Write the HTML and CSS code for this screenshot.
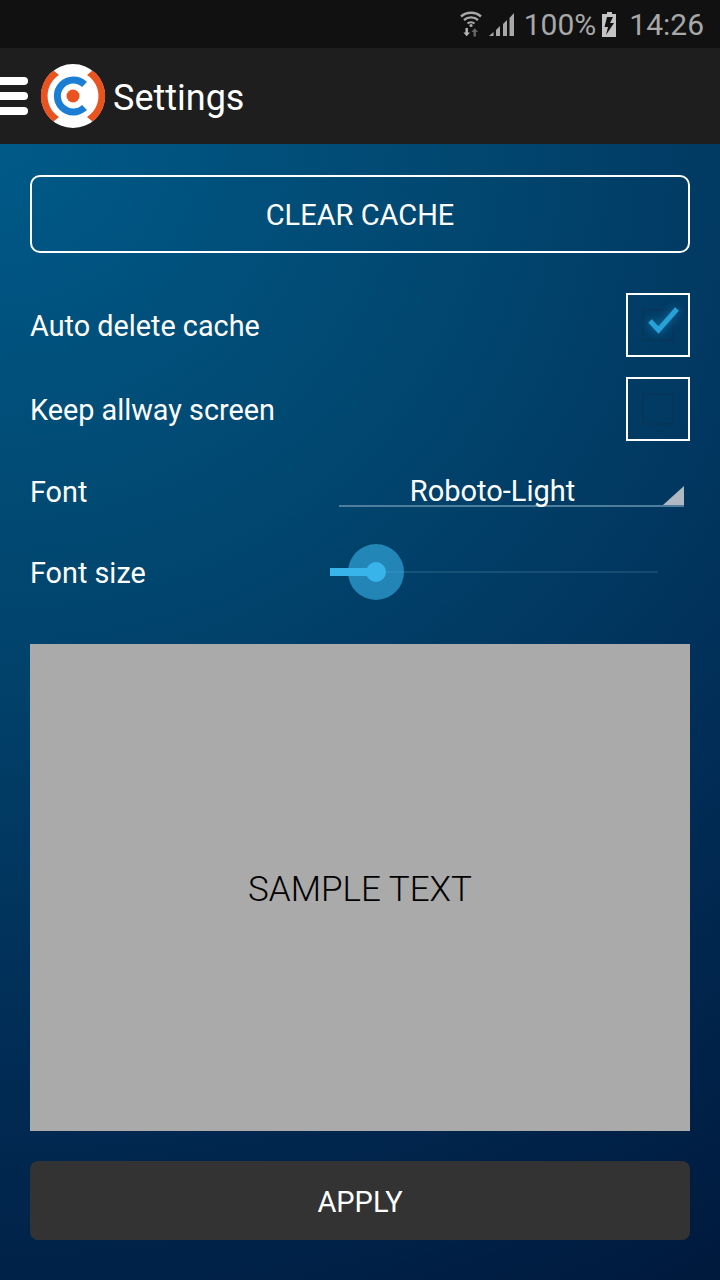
FILE: index.html
```html
<!DOCTYPE html>
<html lang="en">
<head>
    <meta charset="UTF-8">
    <meta name="viewport" content="width=device-width, initial-scale=1.0">
    <title>Settings</title>
    <link rel="stylesheet" href="styles.css">
</head>
<body>
    <div class="status-bar">
        <svg class="icon-wifi" width="22" height="26" viewBox="0 0 22 26">
            <path d="M1 5.500C6.500 .5 15.500 .5 21 5.500" fill="none" stroke="#a8a8a8" stroke-width="2.400"/>
            <path d="M4 9C8 5.500 14 5.500 18 9" fill="none" stroke="#a8a8a8" stroke-width="2.400"/>
            <path d="M7.500 12.500C9.500 10.800 12.500 10.800 14.500 12.500" fill="none" stroke="#a8a8a8" stroke-width="2.200"/>
            <circle cx="11" cy="14.500" r="1.600" fill="#a8a8a8"/>
            <path d="M5.500 17h2.400v4.500h2.100l-3.300 3.800-3.300-3.800h2.100z" fill="#b8b8b8"/>
            <path d="M13.500 25.500v-4.500h-2.100l3.300-3.800 3.300 3.800h-2.100v4.500z" fill="#666"/>
        </svg>
        <svg class="icon-signal" width="26" height="25" viewBox="0 0 26 25">
            <path d="M0 24h4.500v-4z" fill="#a8a8a8"/>
            <path d="M7 24h4V14l-4 4z" fill="#a8a8a8"/>
            <path d="M14 24h4V8l-4 4z" fill="#a8a8a8"/>
            <path d="M20.500 24H25V1l-4.500 5z" fill="#a8a8a8"/>
        </svg>
        <span class="status-text">100%</span>
        <svg class="icon-battery" width="14" height="25" viewBox="0 0 14 25">
            <path d="M5 0h5v2h4v23H0V2h5z" fill="#c4c4c4"/>
            <path d="M11 5H5L2.500 15h3.500L4 23l8-12H8z" fill="#111"/>
        </svg>
        <span class="status-text">14:26</span>
    </div>

    <div class="toolbar">
        <div class="menu-icon">
            <span></span>
            <span></span>
            <span></span>
        </div>
        <svg class="logo" width="66" height="66" viewBox="0 0 66 66">
            <circle cx="33" cy="33" r="32" fill="#fff"/>
            <path d="M13.500 7.500A32 32 0 0 0 13.500 58.500L19 54A25 25 0 0 1 19 12z" fill="#e8531f"/>
            <path d="M52.500 7.500A32 32 0 0 1 52.500 58.500L47 54A25 25 0 0 0 47 12z" fill="#e8531f"/>
            <path d="M44.500 21.500A16 16 0 1 0 44.500 44.500" fill="none" stroke="#1b7dd4" stroke-width="7"/>
            <circle cx="33" cy="33" r="6.500" fill="#e8531f"/>
        </svg>
        <span class="toolbar-title">Settings</span>
    </div>

    <div class="content">
        <button class="btn-clear">CLEAR CACHE</button>

        <div class="row row-check first">
            <span class="label">Auto delete cache</span>
            <div class="check-box">
                <div class="check-inner">
                    <svg class="check-mark" width="36" height="36" viewBox="0 0 36 36">
                        <path d="M4 16l8.500 9L31 4" fill="none" stroke="#28a0d8" stroke-width="5"/>
                    </svg>
                </div>
            </div>
        </div>

        <div class="row row-check">
            <span class="label">Keep allway screen</span>
            <div class="check-box">
                <div class="check-inner"></div>
            </div>
        </div>

        <div class="row row-font">
            <span class="label">Font</span>
            <div class="spinner">
                <span>Roboto-Light</span>
                <i class="spinner-arrow"></i>
            </div>
        </div>

        <div class="row row-size">
            <span class="label">Font size</span>
            <div class="slider">
                <div class="slider-track"></div>
                <div class="slider-fill"></div>
                <div class="slider-halo"></div>
                <div class="slider-thumb"></div>
            </div>
        </div>

        <div class="preview">SAMPLE TEXT</div>

        <button class="btn-apply">APPLY</button>
    </div>
</body>
</html>
```

FILE: styles.css
```css
html, body {
    margin: 0;
    padding: 0;
}

body {
    width: 720px;
    height: 1280px;
    overflow: hidden;
    font-family: Roboto, "Liberation Sans", sans-serif;
    color: #fff;
    display: flex;
    flex-direction: column;
}

/* Status bar */
.status-bar {
    height: 48px;
    background-color: #111;
    display: flex;
    justify-content: flex-end;
    align-items: center;
    padding-right: 16px;
    box-sizing: border-box;
}

.status-text {
    font-size: 30px;
    color: #a8a8a8;
}

.icon-wifi {
    margin: 0 7px 0 0;
}

.icon-signal {
    margin-right: 9px;
}

.icon-battery {
    margin: 0 13px 0 6px;
}

/* Toolbar */
.toolbar {
    height: 96px;
    background-color: #1e1e1e;
    display: flex;
    align-items: center;
}

.menu-icon {
    width: 28px;
    display: flex;
    flex-direction: column;
    gap: 7px;
    margin-right: 12px;
}

.menu-icon span {
    height: 8px;
    background-color: #fff;
    border-radius: 0 4px 4px 0;
}

.logo {
    margin-right: 7px;
}

.toolbar-title {
    font-size: 36px;
    padding-top: 3px;
}

/* Main content */
.content {
    flex: 1;
    padding: 31px 30px 0;
    background: radial-gradient(ellipse 1400px 1300px at 0 0, #005a88 0%, #01466f 35%, #012c55 70%, #001a3e 100%);
    display: flex;
    flex-direction: column;
}

.btn-clear, .btn-apply {
    width: 660px;
    font-family: inherit;
    font-size: 29px;
    color: #fff;
    padding: 2px 0 0;
}

.btn-clear {
    height: 78px;
    background: none;
    border: 2px solid #fff;
    border-radius: 10px;
}

.row {
    display: flex;
    justify-content: space-between;
    align-items: center;
}

.label {
    font-size: 28.8px;
    padding-top: 2px;
}

.row-check {
    height: 64px;
    margin-top: 20px;
}

.row-check.first {
    margin-top: 40px;
}

.check-box {
    width: 64px;
    height: 64px;
    box-sizing: border-box;
    border: 2px solid #fff;
    display: flex;
    justify-content: center;
    align-items: center;
}

.check-inner {
    width: 32px;
    height: 32px;
    box-sizing: border-box;
    border: 2px solid rgba(30, 40, 60, 0.25);
    position: relative;
}

.check-mark {
    position: absolute;
    top: -6px;
    left: 2px;
    filter: drop-shadow(0 0 5px rgba(30, 160, 220, 0.6));
}

.row-font {
    height: 40px;
    margin-top: 30px;
    align-items: flex-start;
}

.row-font .label {
    padding-top: 0;
    line-height: 42px;
}

.spinner {
    width: 345px;
    height: 36px;
    box-sizing: border-box;
    margin-right: 6px;
    border-bottom: 2px solid #4f7d9c;
    text-align: center;
    font-size: 29px;
    line-height: 40px;
    padding-right: 38px;
    position: relative;
}

.spinner-arrow {
    position: absolute;
    right: 0;
    bottom: 0;
    width: 0;
    height: 0;
    border-left: 21px solid transparent;
    border-bottom: 19px solid #b0b8c4;
}

.row-size {
    height: 60px;
    margin-top: 31px;
}

.slider {
    width: 360px;
    height: 60px;
    position: relative;
}

.slider-track {
    position: absolute;
    left: 0;
    right: 32px;
    top: 29px;
    height: 2px;
    background-color: rgba(120, 170, 200, 0.18);
}

.slider-fill {
    position: absolute;
    left: 0;
    top: 26px;
    width: 46px;
    height: 8px;
    background-color: #38b4ea;
}

.slider-halo {
    position: absolute;
    left: 18px;
    top: 2px;
    width: 56px;
    height: 56px;
    border-radius: 50%;
    background-color: rgba(56, 180, 234, 0.6);
}

.slider-thumb {
    position: absolute;
    left: 36px;
    top: 20px;
    width: 20px;
    height: 20px;
    border-radius: 50%;
    background-color: #38b4ea;
}

.preview {
    height: 484px;
    margin-top: 42px;
    padding-top: 3px;
    background-color: #aaa;
    color: #000;
    font-size: 35px;
    font-weight: 300;
    display: flex;
    justify-content: center;
    align-items: center;
}

.btn-apply {
    height: 79px;
    margin-top: 30px;
    background-color: #333;
    border: none;
    border-radius: 8px;
}
```
